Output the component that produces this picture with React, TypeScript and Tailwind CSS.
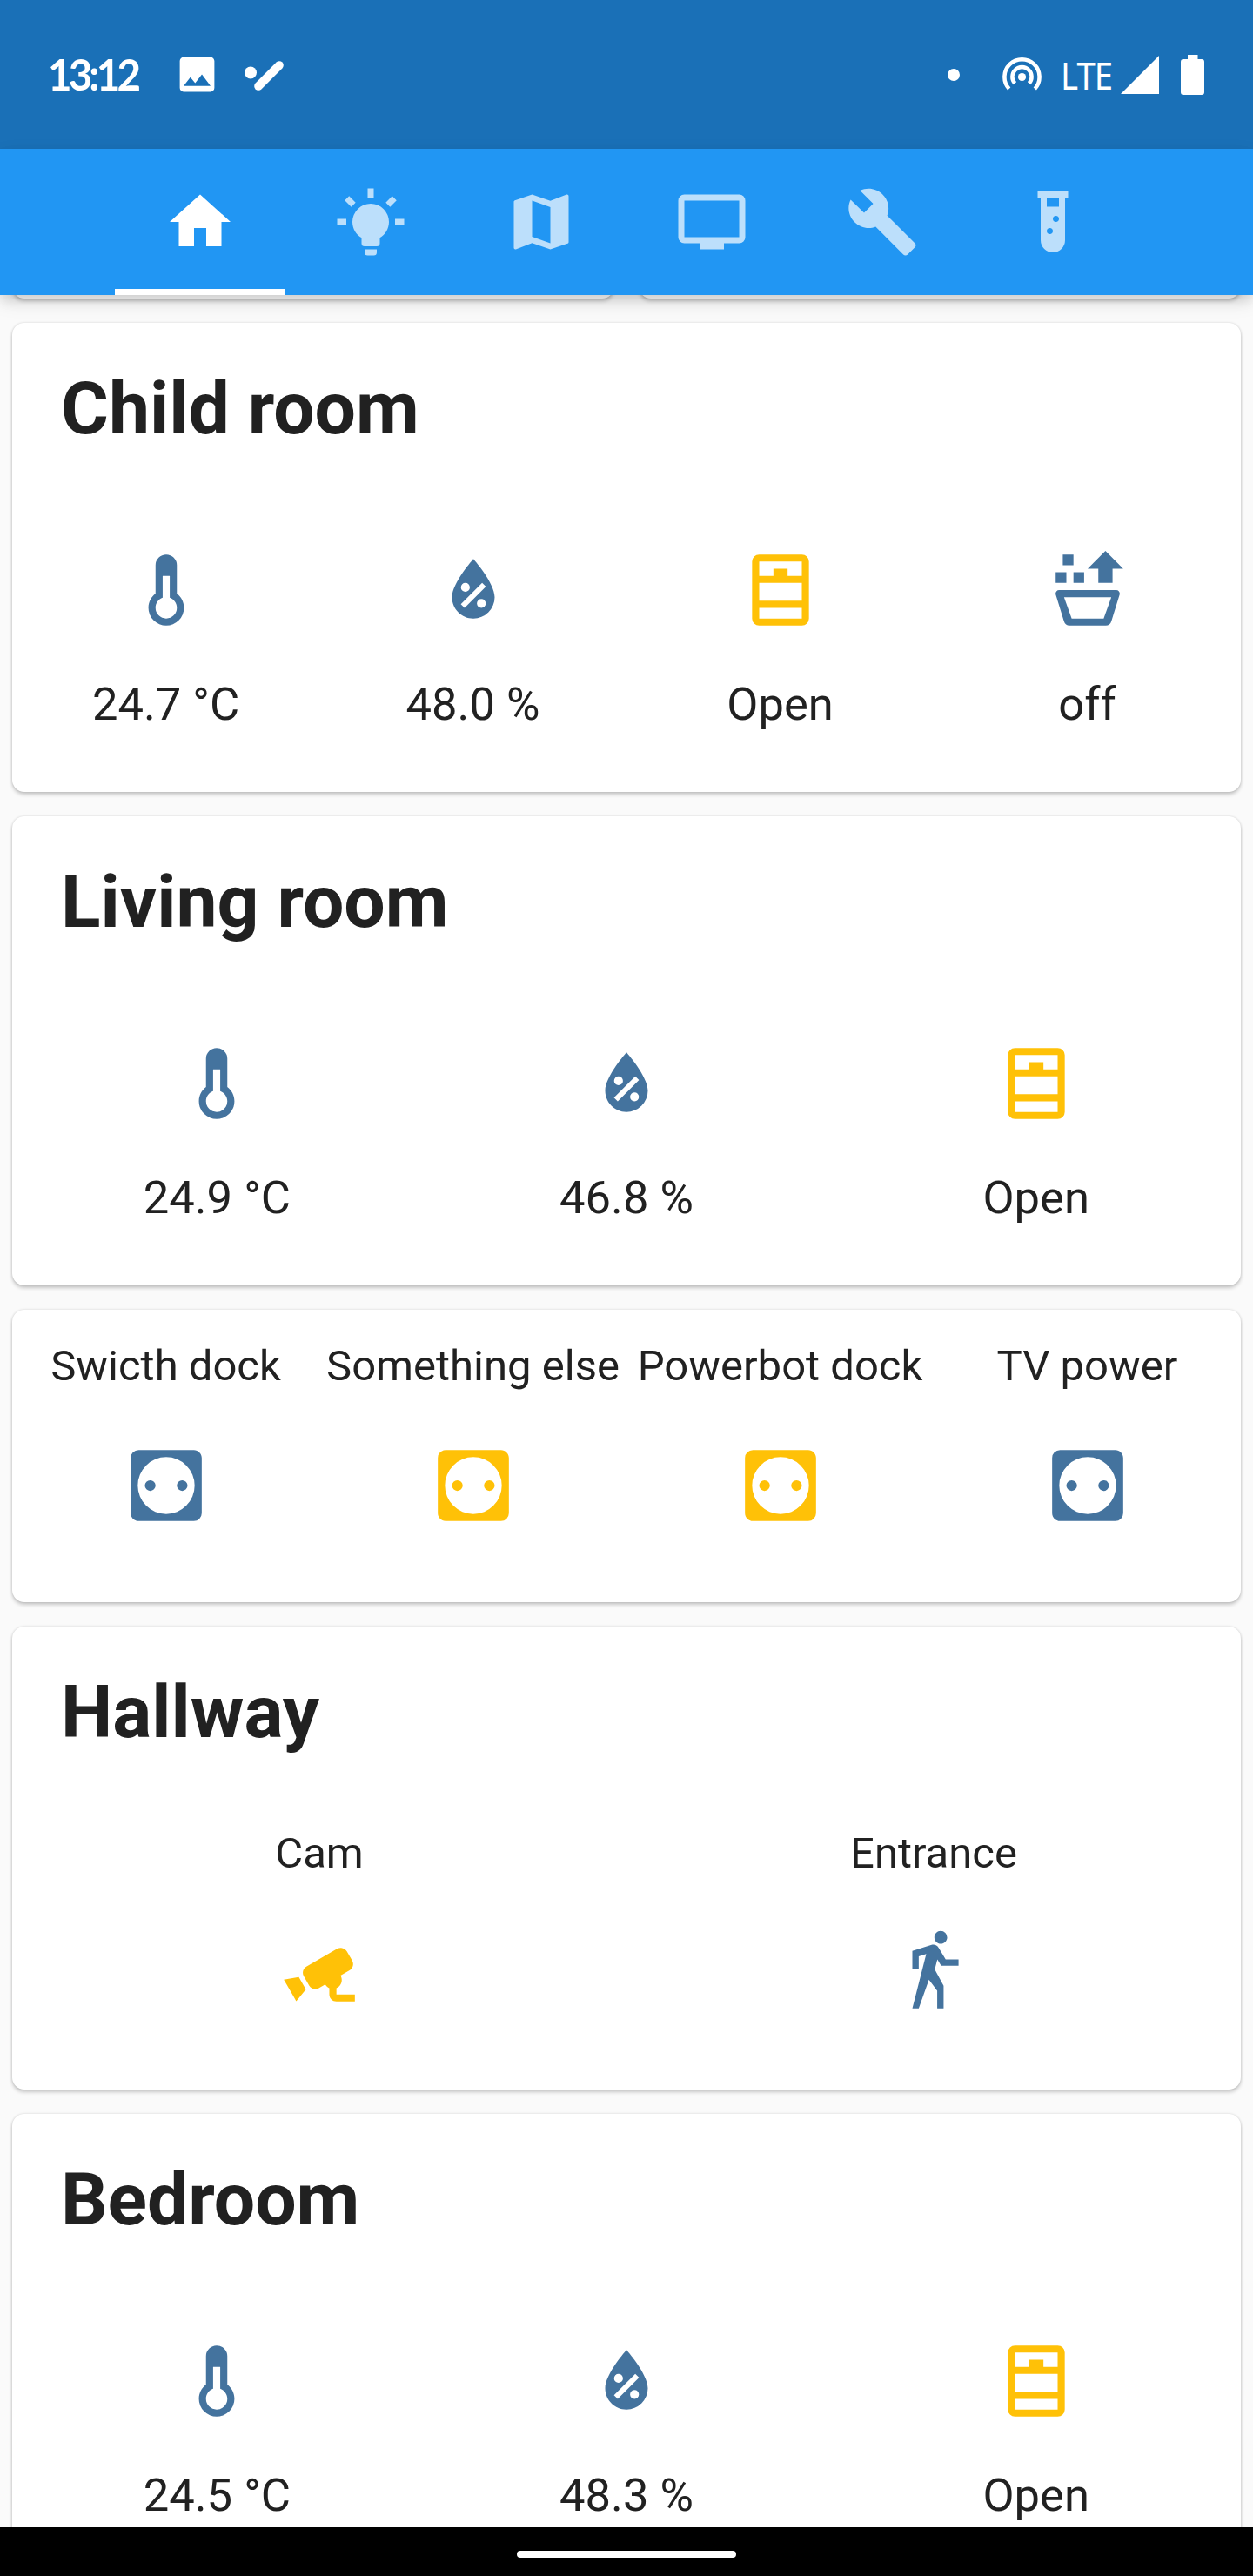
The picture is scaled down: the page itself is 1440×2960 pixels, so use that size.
import type { ReactNode } from 'react';

const icons = {
  home: 'M10,20V14H14V20H19V12H22L12,3L2,12H5V20H10Z',
  bulb: 'M12,6A6,6 0 0,1 18,12C18,14.22 16.79,16.16 15,17.2V19A1,1 0 0,1 14,20H10A1,1 0 0,1 9,19V17.2C7.21,16.16 6,14.22 6,12A6,6 0 0,1 12,6M14,21V22A1,1 0 0,1 13,23H11A1,1 0 0,1 10,22V21H14M20,11H23V13H20V11M1,11H4V13H1V11M13,1V4H11V1H13M4.92,3.5L7.05,5.64L5.63,7.05L3.5,4.93L4.92,3.5M16.95,5.63L19.07,3.5L20.5,4.93L18.37,7.05L16.95,5.63Z',
  map: 'M15,19L9,16.89V5L15,7.11M20.5,3C20.44,3 20.39,3 20.34,3L15,5.1L9,3L3.36,4.9C3.15,4.97 3,5.15 3,5.38V20.5A0.5,0.5 0 0,0 3.5,21C3.55,21 3.61,21 3.66,20.97L9,18.9L15,21L20.64,19.1C20.85,19 21,18.85 21,18.62V3.5A0.5,0.5 0 0,0 20.5,3Z',
  tv: 'M21,17H3V5H21M21,3H3A2,2 0 0,0 1,5V17A2,2 0 0,0 3,19H8V21H16V19H21A2,2 0 0,0 23,17V5A2,2 0 0,0 21,3Z',
  wrench: 'M22.7,19L13.6,9.9C14.5,7.6 14,4.9 12.1,3C10.1,1 7.1,0.6 4.7,1.7L9,6L6,9L1.6,4.7C0.4,7.1 0.9,10.1 2.9,12.1C4.8,14 7.5,14.5 9.8,13.6L18.9,22.7C19.3,23.1 19.9,23.1 20.3,22.7L22.6,20.4C23.1,20 23.1,19.3 22.7,19Z',
  tube: 'M7,2V4H8V18A4,4 0 0,0 12,22A4,4 0 0,0 16,18V4H17V2H7M11,16C10.4,16 10,15.6 10,15C10,14.4 10.4,14 11,14C11.6,14 12,14.4 12,15C12,15.6 11.6,16 11,16M13,12C12.4,12 12,11.6 12,11C12,10.4 12.4,10 13,10C13.6,10 14,10.4 14,11C14,11.6 13.6,12 13,12M14,7H10V4H14V7Z',
  thermometer: 'M17,17A5,5 0 0,1 12,22A5,5 0 0,1 7,17C7,15.36 7.79,13.91 9,13V5A3,3 0 0,1 12,2A3,3 0 0,1 15,5V13C16.21,13.91 17,15.36 17,17M11,8V14.17C9.83,14.58 9,15.69 9,17A3,3 0 0,0 12,20A3,3 0 0,0 15,17C15,15.69 14.17,14.58 13,14.17V8H11Z',
  humidity: 'M12,3.25C12,3.25 6,10 6,14C6,17.32 8.69,20 12,20A6,6 0 0,0 18,14C18,10 12,3.25 12,3.25M14.47,9.97L15.53,11.03L9.53,17.03L8.47,15.97M9.75,10A1.25,1.25 0 0,1 11,11.25A1.25,1.25 0 0,1 9.75,12.5A1.25,1.25 0 0,1 8.5,11.25A1.25,1.25 0 0,1 9.75,10M14.25,14.5A1.25,1.25 0 0,1 15.5,15.75A1.25,1.25 0 0,1 14.25,17A1.25,1.25 0 0,1 13,15.75A1.25,1.25 0 0,1 14.25,14.5Z',
  blind: 'M6,2H18A2,2 0 0,1 20,4V20A2,2 0 0,1 18,22H6A2,2 0 0,1 4,20V4A2,2 0 0,1 6,2M6,4V8H10V6H14V8H18V4H6M6,10V15H18V10H6M6,17V20H18V17H6Z',
  humidifier: 'M5,2H8V5H5V2M3,7H6V10H3V7M8,7H11V10H8V7M17,1L22,6H19V10H15V6H12L17,1M4,12H20A1,1 0 0,1 21,13.2L18.7,20.7C18.4,21.6 17.9,22 17.1,22H6.9C6.1,22 5.6,21.6 5.3,20.7L3,13.2A1,1 0 0,1 4,12M5.35,14L7.5,20H16.5L18.65,14H5.35Z',
  socket: 'M4.22,2A2.22,2.22 0 0,0 2,4.22V19.78C2,21 3,22 4.22,22H19.78A2.22,2.22 0 0,0 22,19.78V4.22C22,3 21,2 19.78,2H4.22M12,4A8,8 0 0,1 20,12A8,8 0 0,1 12,20A8,8 0 0,1 4,12A8,8 0 0,1 12,4M7.5,10.5A1.5,1.5 0 0,0 6,12A1.5,1.5 0 0,0 7.5,13.5A1.5,1.5 0 0,0 9,12A1.5,1.5 0 0,0 7.5,10.5M16.5,10.5A1.5,1.5 0 0,0 15,12A1.5,1.5 0 0,0 16.5,13.5A1.5,1.5 0 0,0 18,12A1.5,1.5 0 0,0 16.5,10.5Z',
  cctv: 'M18.15,4.94C17.77,4.91 17.37,5 17,5.2L8.35,10.2C7.39,10.76 7.07,12 7.62,12.94L9.12,15.53C9.67,16.5 10.89,16.82 11.85,16.27L13.65,15.23C13.92,15.69 14.32,16.06 14.81,16.27V18.04C14.81,19.13 15.7,20 16.81,20H22V18.04H16.81V16.27C17.72,15.87 18.31,14.97 18.31,14C18.31,13.54 18.19,13.11 17.97,12.73L20.5,11.27C21.47,10.71 21.8,9.5 21.24,8.53L19.74,5.94C19.4,5.34 18.79,5 18.15,4.94M6.22,13.17L2,13.87L2.75,15.17L4.75,18.63L5.5,19.93L8.22,16.63L6.22,13.17Z',
  walk: 'M14.12,10H19V8.2H15.38L13.38,4.87C13.08,4.37 12.54,4.03 11.92,4.03C11.74,4.03 11.58,4.06 11.42,4.11L6,5.8V11H7.8V7.33L9.91,6.67L6,22H7.8L10.67,13.89L13,17V22H14.8V15.59L12.31,11.05L13.04,8.18M14,3.8C15,3.8 15.8,3 15.8,2A1.8,1.8 0 0,0 14,0.2C13,0.2 12.2,1 12.2,2C12.2,3 13,3.8 14,3.8Z',
};

type IconName = keyof typeof icons;

function Icon({ name, className }: { name: IconName; className: string }) {
  return (
    <svg viewBox="0 0 24 24" className={`shrink-0 ${className}`} fill="currentColor" fillRule="evenodd">
      <path d={icons[name]} />
    </svg>
  );
}

interface Entity {
  icon: IconName;
  active?: boolean;
  label?: string;
  value?: string;
}

function Entities({ items }: { items: Entity[] }) {
  return (
    <div className="flex">
      {items.map((e, i) => (
        <div key={i} className="flex w-0 flex-1 flex-col items-center whitespace-nowrap text-[#212121]">
          {e.label && <span className="mb-[60px] text-[49px] leading-[56px]">{e.label}</span>}
          <Icon name={e.icon} className={`size-[98px] ${e.active ? 'text-[#ffc107]' : 'text-[#44739e]'}`} />
          {e.value && <span className="mt-[51px] text-[52.5px] leading-[62px]">{e.value}</span>}
        </div>
      ))}
    </div>
  );
}

function Card({ className, children }: { className: string; children?: ReactNode }) {
  return (
    <section
      className={`shrink-0 rounded-[14px] bg-white shadow-[0_3px_4px_rgba(0,0,0,0.2),0_0_3px_rgba(0,0,0,0.14)] ${className}`}
    >
      {children}
    </section>
  );
}

function Title({ children }: { children: ReactNode }) {
  return <h2 className="pl-[56px] text-[84px] leading-[98px] font-bold text-[#212121]">{children}</h2>;
}

function Room({ name, items }: { name: string; items: Entity[] }) {
  return (
    <Card className="h-[539px] pt-[50px]">
      <Title>{name}</Title>
      <div className="pt-[110px]">
        <Entities items={items} />
      </div>
    </Card>
  );
}

function StatusBar() {
  return (
    <header className="flex h-[171px] shrink-0 items-center bg-[#1a70b7] text-white">
      <span className="ml-[55px] w-[145px] origin-left scale-x-[0.97] font-['Lato'] text-[49px] leading-none font-bold tracking-[-4px]">
        13:12
      </span>
      <svg className="size-[53px]" viewBox="0 0 24 24" fill="currentColor">
        <path d="M21 19V5c0-1.1-.9-2-2-2H5c-1.1 0-2 .9-2 2v14c0 1.1.9 2 2 2h14c1.1 0 2-.9 2-2zM8.5 13.5l2.5 3.01L14.5 12l4.5 6H5l3.5-4.5z" />
      </svg>
      <svg className="ml-[27px] h-[40px] w-[48px]" viewBox="0 0 48 40">
        <circle cx="8" cy="17.5" r="7" fill="currentColor" />
        <path d="M17 33L41 9" stroke="currentColor" strokeWidth="9.6" strokeLinecap="round" />
      </svg>
      <div className="ml-auto flex items-center pr-[56px]">
        <span className="mr-[49px] size-[14px] rounded-full bg-white" />
        <svg className="h-[46px] w-[45px]" viewBox="0 0 45 46" fill="none" stroke="currentColor" strokeWidth="4.5">
          <circle cx="22.5" cy="25.5" r="4.6" fill="currentColor" stroke="none" />
          <path d="M14.4 32.8A11.1 11.1 0 1 1 30.6 32.8" />
          <path d="M7.7 39A20.1 20.1 0 1 1 37.3 39" />
        </svg>
        <span className="ml-[22px] w-[69px] origin-left scale-x-[0.88] font-['Noto_Sans'] text-[43.5px] leading-[44px] tracking-[-1px]">
          LTE
        </span>
        <svg className="size-[44px]" viewBox="0 0 44 44" fill="currentColor">
          <path d="M0 44L44 0V44Z" />
        </svg>
        <svg className="ml-[25px] h-[46px] w-[27px]" viewBox="0 0 27 46" fill="currentColor">
          <path d="M8 0H19.500V5H24a3 3 0 0 1 3 3V43a3 3 0 0 1-3 3H3a3 3 0 0 1-3-3V8a3 3 0 0 1 3-3H8Z" />
        </svg>
      </div>
    </header>
  );
}

const tabs: IconName[] = ['home', 'bulb', 'map', 'tv', 'wrench', 'tube'];

function TabBar() {
  return (
    <nav className="relative z-10 flex h-[168px] shrink-0 justify-center bg-[#2196f3] shadow-[0_7px_14px_-3px_rgba(0,0,0,0.14),0_8px_20px_rgba(0,0,0,0.1)]">
      {tabs.map((name, i) => (
        <div
          key={name}
          className={`flex w-[196px] justify-center border-b-[7px] pt-[42px] ${
            i === 0 ? 'border-white text-white' : 'border-transparent text-[#bcdffb]'
          }`}
        >
          <Icon name={name} className="size-[84px]" />
        </div>
      ))}
    </nav>
  );
}

export default function App() {
  return (
    <div className="flex h-[2960px] w-[1440px] flex-col overflow-hidden bg-[#fafafa] font-['Roboto',sans-serif]">
      <StatusBar />
      <TabBar />
      <main className="flex h-[2565px] shrink-0 flex-col gap-[28px] overflow-hidden px-[14px]">
        <div className="-mt-[24px] flex gap-[28px]">
          <Card className="h-[28px] flex-1" />
          <Card className="h-[28px] flex-1" />
        </div>
        <Room
          name="Child room"
          items={[
            { icon: 'thermometer', value: '24.7 °C' },
            { icon: 'humidity', value: '48.0 %' },
            { icon: 'blind', active: true, value: 'Open' },
            { icon: 'humidifier', value: 'off' },
          ]}
        />
        <Room
          name="Living room"
          items={[
            { icon: 'thermometer', value: '24.9 °C' },
            { icon: 'humidity', value: '46.8 %' },
            { icon: 'blind', active: true, value: 'Open' },
          ]}
        />
        <Card className="h-[336px] pt-[37px]">
          <Entities
            items={[
              { icon: 'socket', label: 'Swicth dock' },
              { icon: 'socket', label: 'Something else', active: true },
              { icon: 'socket', label: 'Powerbot dock', active: true },
              { icon: 'socket', label: 'TV power' },
            ]}
          />
        </Card>
        <Card className="h-[532px] pt-[50px]">
          <Title>Hallway</Title>
          <div className="pt-[85px]">
            <Entities
              items={[
                { icon: 'cctv', label: 'Cam', active: true },
                { icon: 'walk', label: 'Entrance' },
              ]}
            />
          </div>
        </Card>
        <Room
          name="Bedroom"
          items={[
            { icon: 'thermometer', value: '24.5 °C' },
            { icon: 'humidity', value: '48.3 %' },
            { icon: 'blind', active: true, value: 'Open' },
          ]}
        />
      </main>
      <footer className="flex h-[56px] shrink-0 justify-center bg-black pt-[27px]">
        <div className="h-[8px] w-[252px] rounded-full bg-white" />
      </footer>
    </div>
  );
}
